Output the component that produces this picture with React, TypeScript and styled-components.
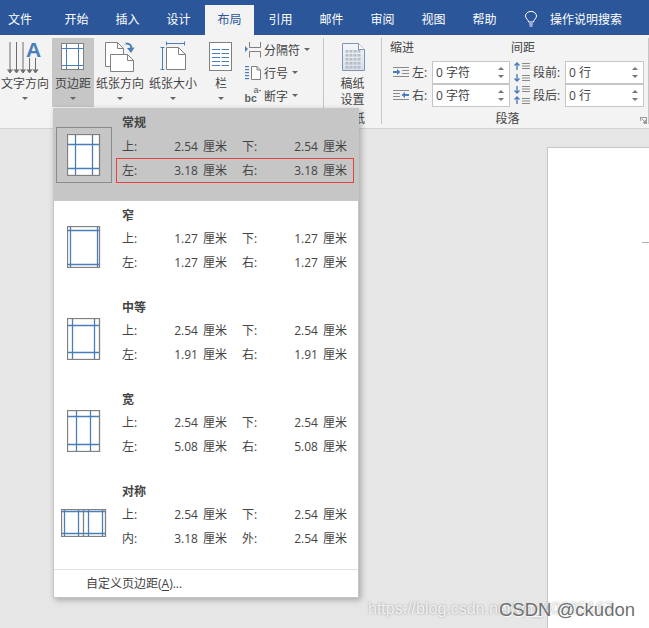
import React from 'react'
import styled, { createGlobalStyle } from 'styled-components'

const GlobalStyle = createGlobalStyle`
  html, body {
    margin: 0;
    padding: 0;
    overflow: hidden;
    background: #e6e6e6;
  }
`

const FONT = `"Open Sans", "Noto Sans CJK SC", sans-serif`

const Window = styled.div`
  position: relative;
  display: flex;
  flex-direction: column;
  width: 649px;
  height: 628px;
  overflow: hidden;
  font-family: ${FONT};
  font-size: 12px;
  color: #444;
`

const TabBar = styled.div`
  display: flex;
  align-items: flex-end;
  height: 35px;
  flex: none;
  background: #2b579a;
  color: #fff;
`

const Tab = styled.div<{ $active?: boolean; $first?: boolean }>`
  display: flex;
  align-items: center;
  justify-content: center;
  box-sizing: border-box;
  height: 30px;
  padding-bottom: 3px;
  width: ${p => (p.$active ? '49px' : '51px')};
  margin: ${p => (p.$active ? '0 1px' : '0')};
  padding-right: ${p => (p.$first ? '11px' : '0')};
  background: ${p => (p.$active ? '#f3f3f3' : 'transparent')};
  color: ${p => (p.$active ? '#2b579a' : '#fff')};
`

const SearchBox = styled.div`
  display: flex;
  align-items: center;
  gap: 12px;
  height: 30px;
  padding-bottom: 3px;
  box-sizing: border-box;
  margin-left: 14px;
`

const Ribbon = styled.div`
  display: flex;
  height: 94px;
  flex: none;
  box-sizing: border-box;
  background: #f3f3f3;
  border-bottom: 1px solid #d2d2d2;
`

const Group = styled.div<{ $width: number }>`
  position: relative;
  display: flex;
  flex-direction: column;
  flex: none;
  box-sizing: border-box;
  width: ${p => p.$width}px;
  padding-top: 3px;
  &::after {
    content: '';
    position: absolute;
    top: 3px;
    bottom: 4px;
    right: 0;
    width: 1px;
    background: #c6c6c6;
  }
`

const GroupBody = styled.div<{ $center?: boolean; $pad?: number }>`
  display: flex;
  flex: 1;
  justify-content: ${p => (p.$center ? 'center' : 'flex-start')};
  padding-left: ${p => p.$pad ?? 0}px;
  padding-right: ${p => (p.$center ? 1 : 0)}px;
`

const GroupLabel = styled.div<{ $shift?: number }>`
  height: 20px;
  line-height: 22px;
  text-align: center;
  padding-right: ${p => p.$shift ?? 0}px;
`

const LargeButton = styled.div<{ $width: number; $gap?: number; $pressed?: boolean }>`
  display: flex;
  flex-direction: column;
  align-items: center;
  flex: none;
  box-sizing: border-box;
  width: ${p => p.$width}px;
  height: 69px;
  margin-right: ${p => p.$gap ?? 0}px;
  padding-top: 1px;
  background: ${p => (p.$pressed ? '#c6c6c6' : 'transparent')};
  svg {
    display: block;
    flex: none;
  }
`

const LargeLabel = styled.div`
  line-height: 16px;
  margin-top: 0.5px;
  text-align: center;
  white-space: nowrap;
`

const Caret = styled.span<{ $top?: number; $left?: number }>`
  display: block;
  flex: none;
  width: 0;
  height: 0;
  margin-top: ${p => p.$top ?? 0}px;
  margin-left: ${p => p.$left ?? 0}px;
  border-left: 3px solid transparent;
  border-right: 3px solid transparent;
  border-top: 3px solid #666;
`

const SmallColumn = styled.div`
  display: flex;
  flex-direction: column;
`

const SmallButton = styled.div`
  display: flex;
  align-items: center;
  height: 23px;
  gap: 3px;
  white-space: nowrap;
`

const SpacingGrid = styled.div`
  display: flex;
`

const SpacingColumn = styled.div<{ $width: number }>`
  display: flex;
  flex-direction: column;
  width: ${p => p.$width}px;
`

const SpacingTitle = styled.div`
  height: 20px;
  line-height: 20px;
  margin-bottom: 3px;
`

const Field = styled.div`
  display: flex;
  align-items: center;
  height: 22px;
  margin-bottom: 1px;
  padding-left: 2px;
`

const FieldLabel = styled.div<{ $width: number }>`
  width: ${p => p.$width}px;
  padding-left: 2px;
  box-sizing: border-box;
  white-space: nowrap;
`

const Spinner = styled.div<{ $width: number }>`
  display: flex;
  align-items: center;
  justify-content: space-between;
  box-sizing: border-box;
  width: ${p => p.$width}px;
  height: 23px;
  padding: 0 5px 0 3px;
  background: #fff;
  border: 1px solid #c6c6c6;
`

const SpinArrows = styled.div`
  display: flex;
  flex-direction: column;
  gap: 5px;
`

const SpinArrow = styled.span<{ $up?: boolean }>`
  display: block;
  width: 0;
  height: 0;
  border-left: 3px solid transparent;
  border-right: 3px solid transparent;
  border-top: ${p => (p.$up ? 'none' : '3px solid #777')};
  border-bottom: ${p => (p.$up ? '3px solid #777' : 'none')};
`

const Launcher = styled.svg`
  position: absolute;
  right: 2px;
  bottom: 4px;
`

const Workspace = styled.div`
  display: flex;
  flex: 1;
  min-height: 0;
  padding: 18px 0 0 547px;
  background: #e6e6e6;
`

const DocPage = styled.div`
  display: flex;
  flex-direction: column;
  align-items: flex-end;
  flex: 1;
  padding-top: 94px;
  background: #fff;
  border-left: 1px solid #c6c6c6;
  border-top: 1px solid #c6c6c6;
`

const RulerTick = styled.div`
  width: 7px;
  height: 1px;
  background: #b4b4b4;
`

const Menu = styled.div`
  position: absolute;
  top: 108px;
  left: 53px;
  width: 306px;
  box-sizing: border-box;
  background: #fff;
  border: 1px solid #c6c6c6;
  box-shadow: 2px 2px 6px rgba(0, 0, 0, 0.28);
`

const MenuItem = styled.div<{ $selected?: boolean }>`
  display: flex;
  align-items: center;
  height: 92px;
  padding-left: 2px;
  background: ${p => (p.$selected ? '#c6c6c6' : 'transparent')};
`

const Thumb = styled.div<{ $selected?: boolean }>`
  display: flex;
  align-items: center;
  justify-content: center;
  flex: none;
  box-sizing: border-box;
  width: 56px;
  height: 56px;
  margin-right: 10px;
  border: 1px solid ${p => (p.$selected ? '#8a8a8a' : 'transparent')};
  svg {
    display: block;
  }
`

const ItemText = styled.div`
  display: flex;
  flex-direction: column;
  align-self: flex-start;
  width: 225px;
  padding-top: 1px;
`

const ItemTitle = styled.div<{ $selected?: boolean }>`
  height: 25px;
  line-height: ${p => (p.$selected ? 26 : 28)}px;
  font-weight: 700;
`

const ItemRow = styled.div<{ $marked?: boolean }>`
  position: relative;
  display: flex;
  justify-content: space-between;
  height: 24px;
  line-height: 24px;
  word-spacing: 2px;
  &::after {
    content: '';
    display: ${p => (p.$marked ? 'block' : 'none')};
    position: absolute;
    top: -1px;
    bottom: 0;
    left: -6px;
    right: -7px;
    border: 1px solid #e8403c;
  }
`

const Pair = styled.div`
  display: flex;
  justify-content: space-between;
  width: 105px;
`

const MenuFooter = styled.div`
  height: 27px;
  line-height: 27px;
  padding-left: 32px;
  border-top: 1px solid #e2e2e2;
  u {
    text-underline-offset: 2px;
  }
`

const WatermarkUrl = styled.div`
  position: absolute;
  left: 368px;
  top: 599px;
  font-family: "Liberation Sans", sans-serif;
  font-size: 16px;
  line-height: 20px;
  white-space: nowrap;
  color: rgba(255, 255, 255, 0.85);
  text-shadow: 0 0 2px rgba(110, 110, 110, 0.7);
`

const WatermarkName = styled.div`
  position: absolute;
  left: 499px;
  top: 599px;
  font-family: "Liberation Sans", sans-serif;
  font-size: 18.5px;
  line-height: 22px;
  white-space: nowrap;
  color: #707070;
  text-shadow: 1px 1px 1px rgba(255, 255, 255, 0.8);
`

const GRAY = '#808080'
const BLUE = '#4a7ebb'

type MarginPreset = {
  w: number
  h: number
  v: number[]
  hz: number[]
  fold?: number
}

function MarginIcon({ w, h, v, hz, fold }: MarginPreset) {
  return (
    <svg width={w + 2} height={h + 1} viewBox={`0 0 ${w + 2} ${h + 1}`}>
      <rect x="0.5" y="0.5" width={w} height={h} fill="#fff" />
      {v.map(x => (
        <line key={x} x1={x + 0.5} x2={x + 0.5} y1="0.5" y2={h + 0.5} stroke={BLUE} strokeWidth="1.3" />
      ))}
      {hz.map(y => (
        <line key={y} x1="0.5" x2={w + 0.5} y1={y + 0.5} y2={y + 0.5} stroke={BLUE} strokeWidth="1.3" />
      ))}
      {fold !== undefined && (
        <line x1={fold + 0.5} x2={fold + 0.5} y1="0.5" y2={h + 0.5} stroke={GRAY} strokeWidth="1.3" />
      )}
      <rect x="0.5" y="0.5" width={w} height={h} fill="none" stroke={GRAY} strokeWidth="1.3" />
    </svg>
  )
}

function TextDirectionIcon() {
  const arrows = [
    { x: 10, top: 42 },
    { x: 16.5, top: 42 },
    { x: 23, top: 42 },
    { x: 29.5, top: 58 },
    { x: 35.5, top: 58 },
  ]
  return (
    <svg width="50" height="36" viewBox="0 39 50 36">
      {arrows.map(a => (
        <g key={a.x} stroke="#6e6e6e" strokeWidth="1" fill="none">
          <line x1={a.x} x2={a.x} y1={a.top} y2="72" />
          <path d={`M${a.x - 2.5} 69.5 L${a.x} 73 L${a.x + 2.5} 69.5`} fill="#6e6e6e" />
        </g>
      ))}
      <text x="33.5" y="57" textAnchor="middle" fontFamily="Liberation Sans, sans-serif" fontWeight="700" fontSize="21" fill="#4a7ebb">
        A
      </text>
    </svg>
  )
}

function PageMarginsIcon() {
  return (
    <svg width="42" height="36" viewBox="52 39 42 36">
      <rect x="61.5" y="43.5" width="22" height="26" fill="#fff" />
      <g stroke={BLUE} strokeWidth="1">
        <line x1="66.5" x2="66.5" y1="43.5" y2="69.5" />
        <line x1="78.5" x2="78.5" y1="43.5" y2="69.5" />
        <line x1="61.5" x2="83.5" y1="48.5" y2="48.5" />
        <line x1="61.5" x2="83.5" y1="65.5" y2="65.5" />
      </g>
      <rect x="61.5" y="43.5" width="22" height="26" fill="none" stroke={GRAY} />
    </svg>
  )
}

function OrientationIcon() {
  return (
    <svg width="48" height="36" viewBox="96 39 48 36">
      <path d="M105.5 42.5 H117.5 L123.5 48.5 V66.5 H105.5 Z" fill="#fff" stroke={GRAY} />
      <path d="M117.5 42.5 V48.5 H123.5" fill="none" stroke={GRAY} />
      <path d="M110.5 54.5 H127.5 L133.5 60.5 V71.5 H110.5 Z" fill="#fff" stroke={GRAY} />
      <path d="M127.5 54.5 V60.5 H133.5" fill="none" stroke={GRAY} />
      <path d="M125.5 43.5 C130.5 43.5 132 46 131 49.5" fill="none" stroke={BLUE} strokeWidth="2" />
      <path d="M127 48 L131 53 L134.5 47.5 Z" fill={BLUE} />
    </svg>
  )
}

function SizeIcon() {
  return (
    <svg width="50" height="36" viewBox="148 39 50 36">
      <path d="M166.5 47.5 H178.5 L185.5 54.5 V69.5 H166.5 Z" fill="#fff" stroke={GRAY} />
      <path d="M178.5 47.5 V54.5 H185.5" fill="none" stroke={GRAY} />
      <g stroke={BLUE} strokeWidth="1">
        <line x1="166" x2="185" y1="43.5" y2="43.5" />
        <line x1="166.5" x2="166.5" y1="41.5" y2="45.5" />
        <line x1="184.5" x2="184.5" y1="41.5" y2="45.5" />
        <line x1="162.5" x2="162.5" y1="47" y2="70" />
        <line x1="160.5" x2="164.5" y1="47.5" y2="47.5" />
        <line x1="160.5" x2="164.5" y1="69.5" y2="69.5" />
      </g>
    </svg>
  )
}

function ColumnsIcon() {
  const rows = [49.5, 53.5, 57.5, 61.5, 65.5]
  return (
    <svg width="32" height="36" viewBox="205 39 32 36">
      <rect x="209.5" y="42.5" width="22" height="28" fill="#fff" stroke={GRAY} />
      {rows.map(y => (
        <g key={y} stroke={BLUE} strokeWidth="1">
          <line x1="212" x2="220" y1={y} y2={y} />
          <line x1="221.5" x2="229" y1={y} y2={y} />
        </g>
      ))}
    </svg>
  )
}

function BreaksIcon() {
  return (
    <svg width="18" height="18" viewBox="0 0 18 18">
      <path d="M2 5 L5 8 L2 11 Z" fill={BLUE} />
      <path d="M6.5 1 V6.5 H17.5 V1" fill="none" stroke={GRAY} />
      <path d="M6.5 16.5 V10.5 H17.5 V16.5" fill="none" stroke={GRAY} />
    </svg>
  )
}

function LineNumbersIcon() {
  return (
    <svg width="18" height="18" viewBox="0 0 18 18">
      <g fill={BLUE}>
        <rect x="2" y="2" width="4" height="1.2" />
        <rect x="2" y="5" width="4" height="1.2" />
        <rect x="2" y="8" width="4" height="1.2" />
        <rect x="2" y="11" width="4" height="1.2" />
        <rect x="2" y="14" width="4" height="1.2" />
      </g>
      <path d="M8.5 2.5 H14 L17.5 6 V15.5 H8.5 Z" fill="#fff" stroke={GRAY} />
      <path d="M14 2.5 V6 H17.5" fill="none" stroke={GRAY} />
    </svg>
  )
}

function HyphenationIcon() {
  return (
    <svg width="18" height="22" viewBox="0 0 18 22" fontFamily="Liberation Sans, sans-serif" fontWeight="700">
      <text x="10.5" y="8" fontSize="9" fill="#777">a-</text>
      <text x="1.5" y="17" fontSize="10.5" fill="#566">bc</text>
    </svg>
  )
}

function ManuscriptIcon() {
  const cols = [347, 351, 355, 359]
  const rows = [50, 54, 58, 62, 66]
  return (
    <svg width="42" height="36" viewBox="332 39 42 36">
      <defs>
        <linearGradient id="sheet" x1="0" y1="0" x2="0" y2="1">
          <stop offset="0" stopColor="#f4f6fa" />
          <stop offset="1" stopColor="#d6deea" />
        </linearGradient>
      </defs>
      <path d="M342.5 43.5 H358.5 L364.5 49.5 V70.5 H342.5 Z" fill="url(#sheet)" stroke="#7f93b2" />
      <path d="M358.5 43.5 V49.5 H364.5" fill="#fff" stroke="#7f93b2" />
      {rows.map(y =>
        cols.map(x => <rect key={`${x}-${y}`} x={x - 1.5} y={y} width="3" height="2.6" fill="#b8bdc5" />)
      )}
    </svg>
  )
}

function BulbIcon() {
  return (
    <svg width="14" height="16" viewBox="0 0 14 16" fill="none" stroke="#fff" strokeWidth="1">
      <path d="M4.5 11 C4.5 8.5 1.5 7.8 1.5 5 A5.5 4.6 0 0 1 12.5 5 C12.5 7.8 9.5 8.5 9.5 11 Z" />
      <path d="M5 13 H9 M5.5 15 H8.5" />
    </svg>
  )
}

function IndentIcon({ flip }: { flip?: boolean }) {
  return (
    <svg width="18" height="12" viewBox="0 0 18 12">
      <g transform={flip ? 'matrix(-1 0 0 1 18 0)' : undefined}>
        <g stroke="#8a8a8a" strokeWidth="1">
          <line x1="1" x2="17" y1="1.5" y2="1.5" />
          <line x1="10" x2="17" y1="4.5" y2="4.5" />
          <line x1="10" x2="17" y1="7.5" y2="7.5" />
          <line x1="1" x2="17" y1="10.5" y2="10.5" />
        </g>
        <path d="M1 5 H5 V3 L8.5 6 L5 9 V7 H1 Z" fill={BLUE} />
      </g>
    </svg>
  )
}

function SpaceIcon({ after }: { after?: boolean }) {
  const lines = [1.5, 4, 6.5, 13.5, 16, 18.5]
  return (
    <svg width="18" height="20" viewBox="0 0 18 20">
      <g stroke="#8a8a8a" strokeWidth="1">
        {lines.map(y => (
          <line key={y} x1="9" x2="17" y1={y} y2={y} />
        ))}
      </g>
      <g stroke={BLUE} strokeWidth="1.4" fill="none">
        {after ? (
          <>
            <path d="M4 1 V8 M1.5 5.5 L4 8 L6.5 5.5" />
            <path d="M4 19 V12 M1.5 14.5 L4 12 L6.5 14.5" />
          </>
        ) : (
          <>
            <path d="M4 8 V1 M1.5 3.5 L4 1 L6.5 3.5" />
            <path d="M4 12 V19 M1.5 16.5 L4 19 L6.5 16.5" />
          </>
        )}
      </g>
    </svg>
  )
}

type Side = { label: string; value: string }

type MarginOption = {
  title: string
  icon: MarginPreset
  rows: [Side, Side][]
  selected?: boolean
}

const side = (label: string, value: string): Side => ({ label: `${label}:`, value: `${value} 厘米` })

const options: MarginOption[] = [
  {
    title: '常规',
    selected: true,
    icon: { w: 32, h: 41, v: [8, 25], hz: [10, 34] },
    rows: [
      [side('上', '2.54'), side('下', '2.54')],
      [side('左', '3.18'), side('右', '3.18')],
    ],
  },
  {
    title: '窄',
    icon: { w: 32, h: 41, v: [3, 30], hz: [4, 38] },
    rows: [
      [side('上', '1.27'), side('下', '1.27')],
      [side('左', '1.27'), side('右', '1.27')],
    ],
  },
  {
    title: '中等',
    icon: { w: 32, h: 41, v: [5, 27], hz: [7, 34] },
    rows: [
      [side('上', '2.54'), side('下', '2.54')],
      [side('左', '1.91'), side('右', '1.91')],
    ],
  },
  {
    title: '宽',
    icon: { w: 32, h: 41, v: [9, 23], hz: [6, 34] },
    rows: [
      [side('上', '2.54'), side('下', '2.54')],
      [side('左', '5.08'), side('右', '5.08')],
    ],
  },
  {
    title: '对称',
    icon: { w: 44, h: 27, v: [3, 17, 27, 41], hz: [2, 24], fold: 22 },
    rows: [
      [side('上', '2.54'), side('下', '2.54')],
      [side('内', '3.18'), side('外', '2.54')],
    ],
  },
]

const tabs = ['开始', '插入', '设计', '布局', '引用', '邮件', '审阅', '视图', '帮助']

export default function App() {
  return (
    <Window>
      <GlobalStyle />
      <TabBar>
        <Tab $first>文件</Tab>
        {tabs.map(t => (
          <Tab key={t} $active={t === '布局'}>{t}</Tab>
        ))}
        <SearchBox>
          <BulbIcon />
          <span>操作说明搜索</span>
        </SearchBox>
      </TabBar>

      <Ribbon>
        <Group $width={324}>
          <GroupBody>
            <LargeButton $width={50} $gap={2}>
              <TextDirectionIcon />
              <LargeLabel>文字方向</LargeLabel>
              <Caret $top={5} />
            </LargeButton>
            <LargeButton $width={42} $gap={2} $pressed>
              <PageMarginsIcon />
              <LargeLabel>页边距</LargeLabel>
              <Caret $top={5} />
            </LargeButton>
            <LargeButton $width={48} $gap={4}>
              <OrientationIcon />
              <LargeLabel>纸张方向</LargeLabel>
              <Caret $top={5} />
            </LargeButton>
            <LargeButton $width={50} $gap={7}>
              <SizeIcon />
              <LargeLabel>纸张大小</LargeLabel>
              <Caret $top={5} />
            </LargeButton>
            <LargeButton $width={32} $gap={6}>
              <ColumnsIcon />
              <LargeLabel>栏</LargeLabel>
              <Caret $top={5} />
            </LargeButton>
            <SmallColumn>
              <SmallButton>
                <BreaksIcon />
                <span>分隔符</span>
                <Caret $left={1} />
              </SmallButton>
              <SmallButton>
                <LineNumbersIcon />
                <span>行号</span>
                <Caret $left={1} />
              </SmallButton>
              <SmallButton>
                <HyphenationIcon />
                <span>断字</span>
                <Caret $left={1} />
              </SmallButton>
            </SmallColumn>
          </GroupBody>
          <GroupLabel />
        </Group>

        <Group $width={58}>
          <GroupBody $center>
            <LargeButton $width={42}>
              <ManuscriptIcon />
              <LargeLabel>稿纸<br />设置</LargeLabel>
            </LargeButton>
          </GroupBody>
          <GroupLabel>稿纸</GroupLabel>
        </Group>

        <Group $width={267}>
          <GroupBody $pad={8}>
            <SpacingGrid>
              <SpacingColumn $width={121}>
                <SpacingTitle>缩进</SpacingTitle>
                <Field>
                  <IndentIcon />
                  <FieldLabel $width={22}>左:</FieldLabel>
                  <Spinner $width={78}>
                    <span>0 字符</span>
                    <SpinArrows><SpinArrow $up /><SpinArrow /></SpinArrows>
                  </Spinner>
                </Field>
                <Field>
                  <IndentIcon flip />
                  <FieldLabel $width={22}>右:</FieldLabel>
                  <Spinner $width={78}>
                    <span>0 字符</span>
                    <SpinArrows><SpinArrow $up /><SpinArrow /></SpinArrows>
                  </Spinner>
                </Field>
              </SpacingColumn>
              <SpacingColumn $width={134}>
                <SpacingTitle>间距</SpacingTitle>
                <Field>
                  <SpaceIcon />
                  <FieldLabel $width={34}>段前:</FieldLabel>
                  <Spinner $width={79}>
                    <span>0 行</span>
                    <SpinArrows><SpinArrow $up /><SpinArrow /></SpinArrows>
                  </Spinner>
                </Field>
                <Field>
                  <SpaceIcon after />
                  <FieldLabel $width={34}>段后:</FieldLabel>
                  <Spinner $width={79}>
                    <span>0 行</span>
                    <SpinArrows><SpinArrow $up /><SpinArrow /></SpinArrows>
                  </Spinner>
                </Field>
              </SpacingColumn>
            </SpacingGrid>
          </GroupBody>
          <GroupLabel $shift={16}>段落</GroupLabel>
          <Launcher width="7" height="7" viewBox="0 0 9 9" fill="none" stroke="#777">
            <path d="M0.5 5 V0.5 H8.5 V8.5 H5" />
            <path d="M2 2 L7 7 M7 4 V7 H4" />
          </Launcher>
        </Group>
      </Ribbon>

      <Workspace>
        <DocPage>
          <RulerTick />
        </DocPage>
      </Workspace>

      <Menu>
        {options.map(o => (
          <MenuItem key={o.title} $selected={o.selected}>
            <Thumb $selected={o.selected}>
              <MarginIcon {...o.icon} />
            </Thumb>
            <ItemText>
              <ItemTitle $selected={o.selected}>{o.title}</ItemTitle>
              {o.rows.map((row, idx) => (
                <ItemRow key={idx} $marked={o.selected && idx === 1}>
                  {row.map(s => (
                    <Pair key={s.label}>
                      <span>{s.label}</span>
                      <span>{s.value}</span>
                    </Pair>
                  ))}
                </ItemRow>
              ))}
            </ItemText>
          </MenuItem>
        ))}
        <MenuFooter>自定义页边距(<u>A</u>)...</MenuFooter>
      </Menu>

      <WatermarkUrl>https://blog.csdn.net/qq_40605167</WatermarkUrl>
      <WatermarkName>CSDN @ckudon</WatermarkName>
    </Window>
  )
}
